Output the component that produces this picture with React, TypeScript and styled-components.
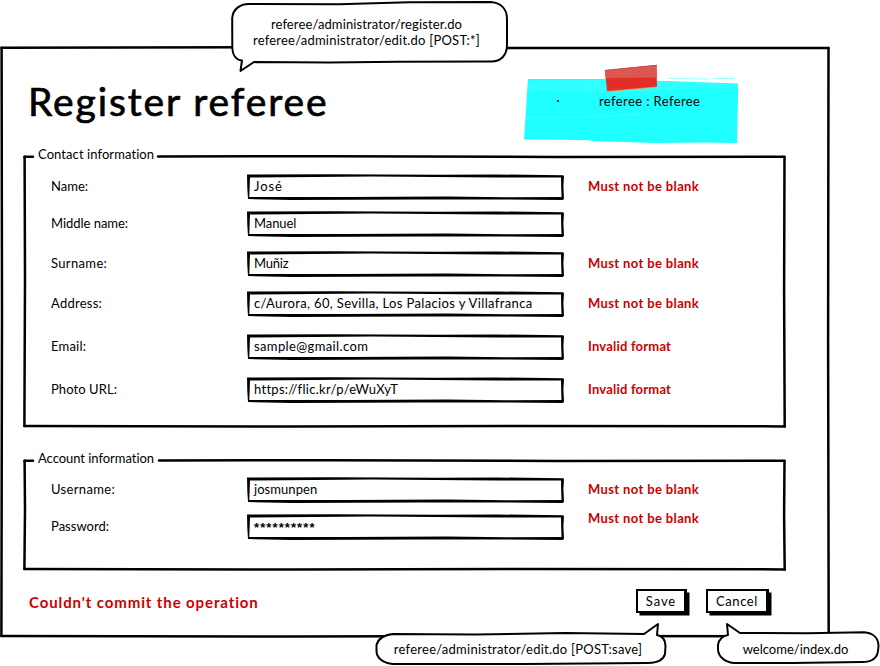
import React from "react";
import styled, { createGlobalStyle } from "styled-components";

const GlobalStyle = createGlobalStyle`
  * { box-sizing: border-box; }
  body {
    margin: 0;
    background: #fff;
    color: #000;
    font: 13px/16px Lato, "Liberation Sans", sans-serif;
    overflow: hidden;
  }
`;

const Canvas = styled.div`
  position: relative;
  width: 880px;
  height: 666px;
  padding-top: 46px;
  overflow: hidden;
`;

const Sketch = styled.svg`
  position: absolute;
  left: 0;
  top: 0;
  overflow: visible;
  pointer-events: none;
  fill: none;
  stroke: #000;
  stroke-linejoin: round;
  stroke-linecap: round;
`;

const Text = styled.span<{ $track?: number }>`
  position: relative;
  white-space: pre;
  letter-spacing: ${(p) => p.$track ?? 0}px;
`;

const Frame = styled.main`
  position: relative;
  width: 830px;
  height: 592px;
  padding: 28px 24px 0 23px;
`;

const Header = styled.header`
  display: flex;
  justify-content: space-between;
  height: 81px;
`;

const Title = styled.h1`
  margin: 0;
  padding-left: 5px;
  font-size: 39px;
  line-height: 55px;
  font-weight: 400;
  letter-spacing: 1.9px;
  white-space: nowrap;
  -webkit-text-stroke: 0.7px #000;
`;

const Note = styled.div`
  position: relative;
  width: 216px;
  height: 70px;
  margin: -9px 66px 0 0;
  padding: 28px 0 0 75px;
`;

const Group = styled.section<{ $height: number; $gap: number }>`
  position: relative;
  display: flow-root;
  width: 763px;
  height: ${(p) => p.$height}px;
  margin-bottom: ${(p) => p.$gap}px;
`;

const Legend = styled.h2<{ $height: number }>`
  margin: -9px 0 0;
  padding: 0 0 9px 15px;
  font: inherit;
  height: ${(p) => p.$height + 9}px;
  line-height: 16px;
`;

const Row = styled.div<{ $gap: number }>`
  display: grid;
  grid-template-columns: 196px 341px 1fr;
  height: 26px;
  margin: 0 0 ${(p) => p.$gap}px 28px;
  line-height: 25px;
`;

const Field = styled.div`
  position: relative;
  width: 316px;
  height: 26px;
  padding-left: 7px;
`;

const Secret = styled(Text)`
  top: 1px;
  font-family: "Liberation Sans", sans-serif;
  font-weight: 700;
`;

const ErrorText = styled(Text)<{ $lift?: number }>`
  color: #cc0000;
  font-weight: 700;
  margin-top: ${(p) => -(p.$lift ?? 0)}px;
`;

const Footer = styled.footer`
  display: flex;
  align-items: flex-start;
  padding: 0 37px 0 6px;
`;

const Failure = styled.p`
  flex: 1;
  margin: 3px 0 0;
  color: #cc0000;
  font-size: 15px;
  line-height: 20px;
  font-weight: 700;
  letter-spacing: 0.89px;
`;

const Button = styled.button<{ $width: number; $track: number }>`
  width: ${(p) => p.$width}px;
  height: 24px;
  margin-left: 19px;
  padding: 0;
  border: 2px solid #000;
  border-right-width: 3px;
  background: #fff;
  color: #000;
  font: inherit;
  letter-spacing: ${(p) => p.$track}px;
  box-shadow: 3px 3px 0 -0.5px #000;
`;

const Callout = styled.aside<{ $x: number; $y: number; $w: number; $h: number }>`
  position: absolute;
  left: ${(p) => p.$x}px;
  top: ${(p) => p.$y}px;
  width: ${(p) => p.$w}px;
  height: ${(p) => p.$h}px;
  display: flex;
  flex-direction: column;
  align-items: center;
  justify-content: center;
`;

/* Pen-drawn rectangle: each edge drifts a little and thins toward one end. */
function Outline({ w, h, gapStart = 0, gapEnd = 0, pen = 2.5 }: { w: number; h: number; gapStart?: number; gapEnd?: number; pen?: number }) {
  const top = gapEnd
    ? `M1.5 1.8H${gapStart}M${gapEnd} 1.5L${w * 0.4} 1.2L${w * 0.7} 1.9L${w - 1.5} 1.8`
    : `M1.5 1.8L${w * 0.3} 1.3L${w * 0.6} 2L${w - 1.5} 2`;
  return (
    <Sketch width={w} height={h} strokeWidth={pen}>
      <path d={top} />
      <path d={`M1.6 1.8L2 ${h * 0.45}L1.4 ${h - 2}`} />
      <path d={`M${w - 1.5} 2L${w - 1.9} ${h * 0.5}L${w - 1.3} ${h - 1.5}`} />
      <path d={`M1.4 ${h - 2}L${w * 0.35} ${h - 1.4}L${w * 0.65} ${h - 2}L${w - 1.3} ${h - 1.6}`} />
    </Sketch>
  );
}

function InputOutline() {
  return (
    <Sketch width="316" height="26">
      <path fill="#000" stroke="none" fillRule="evenodd" d="M0 .4L85 .3L190 .8L250 .5L316 1.2L317 2L316.4 12L317 25L315.5 26L250 25.4L170 25.6L45 26L1 25L.3 14Z M3 3.6L125 2.6L250 3.4L314 3.4L314.2 14L314.5 23L260 23.3L200 22.4L100 23L2.3 23Z" />
    </Sketch>
  );
}

type FieldData = { label: string; lt: number; value: string; vt: number; error?: string; gap: number; lift?: number };

const contact: FieldData[] = [
  { label: "Name:", lt: 0, value: "José", vt: 0.9, error: "Must not be blank", gap: 11 },
  { label: "Middle name:", lt: -0.03, value: "Manuel", vt: -0.1, gap: 14 },
  { label: "Surname:", lt: 0.35, value: "Muñiz", vt: -0.2, error: "Must not be blank", gap: 14 },
  { label: "Address:", lt: 0.25, value: "c/Aurora, 60, Sevilla, Los Palacios y Villafranca", vt: 0.36, error: "Must not be blank", gap: 17 },
  { label: "Email:", lt: 0.2, value: "sample@gmail.com", vt: 0.38, error: "Invalid format", gap: 17 },
  { label: "Photo URL:", lt: 0.08, value: "https://flic.kr/p/eWuXyT", vt: 0.28, error: "Invalid format", gap: 0 },
];

const account: FieldData[] = [
  { label: "Username:", lt: 0.34, value: "josmunpen", vt: 0.06, error: "Must not be blank", gap: 11 },
  { label: "Password:", lt: 0.03, value: "**********", vt: 1.1, error: "Must not be blank", gap: 0, lift: 8 },
];

function FormRow({ data }: { data: FieldData }) {
  const Value = data.label === "Password:" ? Secret : Text;
  return (
    <Row $gap={data.gap}>
      <Text $track={data.lt}>{data.label}</Text>
      <Field>
        <InputOutline />
        <Value $track={data.vt}>{data.value}</Value>
      </Field>
      {data.error && (
        <ErrorText $track={data.error === "Invalid format" ? 0.2 : 0.37} $lift={data.lift}>
          {data.error}
        </ErrorText>
      )}
    </Row>
  );
}

export default function App() {
  return (
    <Canvas>
      <GlobalStyle />
      <Frame>
        <Outline w={830} h={592} />
        <Header>
          <Title>Register referee</Title>
          <Note>
            <Sketch width="216" height="80" stroke="none">
              <path fill="#20ffff" stroke="none" d="M4 14L80 14L140 16L214 18.5L214 30L213 78L180 77.5L130 78L70 76L60 75L0 74.5L2 45L3 28Z" />
              <path fill="#48ffff" stroke="none" d="M5 16L80 15L214 19L214 22L130 26L70 28L4 24Z" opacity=".4" />
              <path stroke="#50ffff" strokeWidth="1" d="M3 53L60 52L115 49M145 13.5L185 14M190 13.5H210" opacity=".6" />
              <path fill="#e12f28" stroke="none" d="M81 5.3L132.5 0L133 22L83 26.5Z" />
              <path fill="#db574f" stroke="none" d="M81 5.3L132.5 0L132.6 12.5L81.5 13Z" />
              <path stroke="#a94c48" strokeWidth=".7" d="M81 5.3L132.5 .3" />
              <path stroke="#f6a63a" strokeWidth=".7" d="M83 26.5L133 22" />
              <circle cx="34" cy="36" r="1" fill="#000" stroke="none" />
            </Sketch>
            <Text $track={0.4}>referee : Referee</Text>
          </Note>
        </Header>
        <Group $height={273} $gap={31}>
          <Outline w={763} h={273} gapStart={10} gapEnd={135} />
          <Legend $height={19}><Text $track={0.08}>Contact information</Text></Legend>
          {contact.map((d) => <FormRow key={d.label} data={d} />)}
        </Group>
        <Group $height={112} $gap={18}>
          <Outline w={763} h={112} gapStart={10} gapEnd={136} />
          <Legend $height={18}><Text $track={-0.04}>Account information</Text></Legend>
          {account.map((d) => <FormRow key={d.label} data={d} />)}
        </Group>
        <Footer>
          <Failure>Couldn't commit the operation</Failure>
          <Button $width={51} $track={0.9}>Save</Button>
          <Button $width={63} $track={0.6}>Cancel</Button>
        </Footer>
      </Frame>

      <Callout $x={229} $y={0} $w={275} $h={64}>
        <Sketch width="280" height="74" strokeWidth="2">
          <path fill="#fff" d="M20 4L110 4.2L180 2.3L262 2C272 3 278 9 278 19L278 45C278 55 272 62 261 61.5L170 61.8L100 62.5L25 62L11.5 71L13 60.5C7 60 3.5 55 3.3 48L3.2 18C4 9 11 4 20 4Z" />
        </Sketch>
        <Text $track={0.12}>referee/administrator/register.do</Text>
        <Text $track={0.22}>referee/administrator/edit.do [POST:*]</Text>
      </Callout>
      <Callout $x={375} $y={634} $w={286} $h={30}>
        <Sketch width="291" height="31" strokeWidth="2">
          <path fill="#fff" d="M18 0L100 .5L190 -1L269 0L283 -10L282 1C287 2 290.5 6 290.5 12L290 20C288 27 282 29 273 29L150 30L18 30C8 29 1.5 24 1.5 17L1.5 11C3 5 9 1 18 0Z" />
        </Sketch>
        <Text $track={0.25}>referee/administrator/edit.do [POST:save]</Text>
      </Callout>
      <Callout $x={717} $y={633} $w={157} $h={31}>
        <Sketch width="163" height="31" strokeWidth="2">
          <path fill="#fff" d="M23 0L90 .3L147 -.7C156 0 161.5 5 161.5 13L161 18C160 26 154 29 145 29L75 30L17 30C7 29 1 23 1 16L1 12C2 6 5 3 11 2L10 -9L23 0Z" />
        </Sketch>
        <Text $track={0}>welcome/index.do</Text>
      </Callout>
    </Canvas>
  );
}
